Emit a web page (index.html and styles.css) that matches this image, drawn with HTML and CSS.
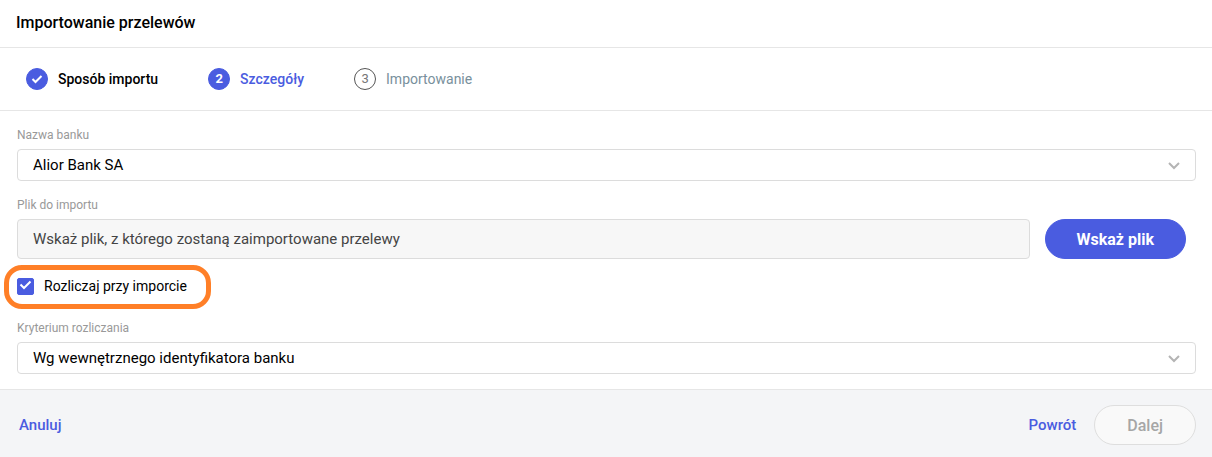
FILE: index.html
```html
<!DOCTYPE html>
<html lang="pl">
<head>
  <meta charset="UTF-8">
  <title>Importowanie przelewów</title>
  <link rel="stylesheet" href="styles.css">
</head>
<body>

  <header class="top-bar">
    <h1>Importowanie przelewów</h1>
  </header>

  <ol class="steps">
    <li class="step done">
      <span class="step-icon">
        <svg width="12" height="10" viewBox="0 0 12 10"><path d="M1.5 5 L4.5 8 L10.5 2" fill="none" stroke="#fff" stroke-width="2"/></svg>
      </span>
      Sposób importu
    </li>
    <li class="step active"><span class="step-icon">2</span>Szczegóły</li>
    <li class="step"><span class="step-icon">3</span>Importowanie</li>
  </ol>

  <form class="import-form">
    <div class="fields">
      <div class="field">
        <label for="bank">Nazwa banku</label>
        <div class="select-box">
          <select id="bank">
            <option>Alior Bank SA</option>
          </select>
          <svg class="arrow" width="12" height="8" viewBox="0 0 12 8"><path d="M1 1 L6 6 L11 1" fill="none" stroke="#b4b4b4" stroke-width="2"/></svg>
        </div>
      </div>

      <div class="field">
        <label for="plik">Plik do importu</label>
        <div class="file-row">
          <input type="text" id="plik" placeholder="Wskaż plik, z którego zostaną zaimportowane przelewy" readonly>
          <button type="button" class="btn btn-primary">Wskaż plik</button>
        </div>
      </div>

      <div class="check-row">
        <label class="check">
          <input type="checkbox" checked>
          <svg class="check-mark" width="13" height="10" viewBox="0 0 13 10"><path d="M1.5 4.5 L5 8 L11.5 1.5" fill="none" stroke="#fff" stroke-width="2"/></svg>
          Rozliczaj przy imporcie
        </label>
      </div>

      <div class="field">
        <label for="kryterium">Kryterium rozliczania</label>
        <div class="select-box">
          <select id="kryterium">
            <option>Wg wewnętrznego identyfikatora banku</option>
          </select>
          <svg class="arrow" width="12" height="8" viewBox="0 0 12 8"><path d="M1 1 L6 6 L11 1" fill="none" stroke="#b4b4b4" stroke-width="2"/></svg>
        </div>
      </div>
    </div>

    <footer class="actions">
      <button type="button" class="btn-link">Anuluj</button>
      <div class="actions-right">
        <button type="button" class="btn-link">Powrót</button>
        <button type="submit" class="btn btn-next" disabled>Dalej</button>
      </div>
    </footer>
  </form>

</body>
</html>
```
FILE: styles.css
```css
* { box-sizing: border-box; }

body {
  margin: 0;
  min-height: 100vh;
  display: flex;
  flex-direction: column;
  font-family: Roboto, "Liberation Sans", sans-serif;
  font-size: 15px;
  line-height: 20px;
  color: #000;
  background: #fff;
}

input, select, button {
  font-family: inherit;
  font-size: 15px;
}

.top-bar {
  padding: 13px 16px 14px;
  border-bottom: 1px solid #e6e6e6;
}

h1 {
  margin: 0;
  font-size: 16px;
  line-height: 20px;
  font-weight: 500;
}

.steps {
  display: flex;
  gap: 50px;
  margin: 0;
  padding: 20px 26px;
  list-style: none;
  border-bottom: 1px solid #e6e6e6;
}

.step {
  display: flex;
  align-items: center;
  gap: 10px;
  font-size: 14px;
  color: #78909c;
}

.step-icon {
  display: flex;
  align-items: center;
  justify-content: center;
  width: 22px;
  height: 22px;
  border: 1px solid #555;
  border-radius: 50%;
  font-size: 13px;
  color: #777;
}

.step.done,
.step.active {
  font-weight: 500;
  color: #000;
}

.step.active {
  color: #4a5ce0;
}

.step.done .step-icon,
.step.active .step-icon {
  border-color: #4a5ce0;
  background: #4a5ce0;
  color: #fff;
  font-weight: 700;
}

.import-form {
  flex: 1;
  display: flex;
  flex-direction: column;
}

.fields {
  display: flex;
  flex-direction: column;
  gap: 16px;
  padding: 16px 16px 15px 17px;
}

.field {
  display: flex;
  flex-direction: column;
  gap: 6px;
}

.field label {
  font-size: 12px;
  line-height: 16px;
  color: #999;
}

.select-box {
  position: relative;
}

.select-box select {
  display: block;
  width: 100%;
  height: 32px;
  padding: 0 40px 0 15px;
  border: 1px solid #dcdcdc;
  border-radius: 4px;
  background: #fff;
  color: #000;
  appearance: none;
}

.arrow {
  position: absolute;
  top: 13px;
  right: 16px;
  pointer-events: none;
}

.file-row {
  display: flex;
  gap: 15px;
  padding-right: 10px;
}

.file-row input {
  flex: 1;
  height: 40px;
  padding: 0 15px;
  border: 1px solid #dcdcdc;
  border-radius: 4px;
  background: #f7f7f7;
}

.file-row input::placeholder {
  color: #444;
}

.btn {
  height: 40px;
  padding: 0 32px;
  border: 1px solid #dedede;
  border-radius: 20px;
  font-size: 16px;
  font-weight: 500;
}

.btn-primary {
  padding: 0 31px;
  border-color: #4a5ce0;
  background: #4a5ce0;
  color: #fff;
  font-weight: 700;
}

.check-row {
  display: flex;
  padding: 1px 0 8px;
}

.check {
  position: relative;
  display: flex;
  align-items: center;
  gap: 10px;
  font-size: 14px;
}

/* orange frame around the option */
.check::after {
  content: "";
  position: absolute;
  inset: -11px -24px -13px -13px;
  border: 5px solid #ff7f27;
  border-radius: 18px;
  pointer-events: none;
}

.check input {
  width: 17px;
  height: 17px;
  margin: 0;
  border: 1px solid #4a5ce0;
  border-radius: 2px;
  appearance: none;
}

.check input:checked {
  background: #4a5ce0;
}

.check-mark {
  position: absolute;
  top: 4px;
  left: 2px;
}

.actions {
  flex: 1;
  display: flex;
  align-items: center;
  justify-content: space-between;
  padding: 15px 16px 12px 19px;
  border-top: 1px solid #e6e6e6;
  background: #f4f5f7;
}

.actions-right {
  display: flex;
  align-items: center;
  gap: 18px;
}

.btn-link {
  padding: 0;
  border: none;
  background: none;
  color: #4a5ce0;
  font-weight: 500;
}

.btn-next {
  background: #f9f9f9;
  color: #a6a6a6;
}
```
